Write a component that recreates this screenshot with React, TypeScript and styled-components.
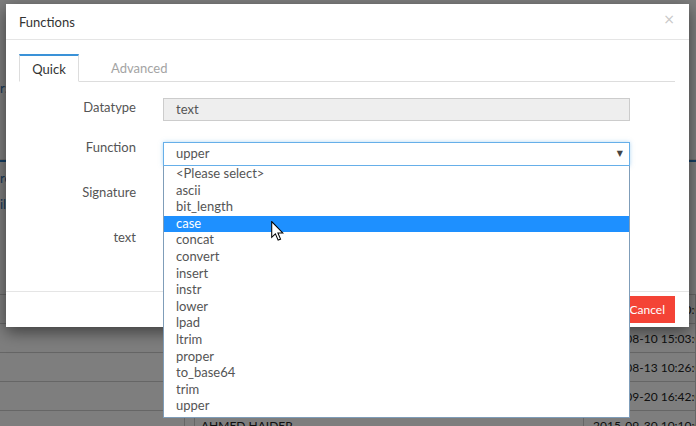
import styled, { createGlobalStyle } from "styled-components";

const GlobalStyle = createGlobalStyle`
  html, body {
    margin: 0;
    padding: 0;
    font-family: "Lato", "Open Sans", sans-serif;
  }
`;

const functions = [
  "<Please select>",
  "ascii",
  "bit_length",
  "case",
  "concat",
  "convert",
  "insert",
  "instr",
  "lower",
  "lpad",
  "ltrim",
  "proper",
  "to_base64",
  "trim",
  "upper",
];

const backRows = [
  { name: "", date: "2015-07-29 11:20:00.0" },
  { name: "", date: "2015-08-10 15:03:00.0" },
  { name: "", date: "2015-08-13 10:26:00.0" },
  { name: "", date: "2015-09-20 16:42:00.0" },
  { name: "AHMED HAIDER", date: "2015-09-30 10:10:00.0" },
];

function App() {
  return (
    <>
      <GlobalStyle />
      <Page>
        <BackPage>
          <BackTop>
            <SideText>r:</SideText>
          </BackTop>
          <BackMid>
            <SideText>re</SideText>
            <SideText>il</SideText>
          </BackMid>
          <BackTable>
            {backRows.map((row) => (
              <BackRow key={row.date}>
                <BackCell />
                <BackCell />
                <BackCell>{row.name}</BackCell>
                <BackCell>{row.date}</BackCell>
              </BackRow>
            ))}
          </BackTable>
        </BackPage>

        <Overlay>
          <Modal>
            <Header>
              <span>Functions</span>
              <Close>×</Close>
            </Header>
            <Body>
              <Tabs>
                <Tab active>Quick</Tab>
                <Tab>Advanced</Tab>
              </Tabs>
              <Form>
                <Label offset={1}>Datatype</Label>
                <ReadOnly>text</ReadOnly>

                <Label offset={-3}>Function</Label>
                <SelectWrap>
                  <Select>
                    <span>upper</span>
                    <Arrow>▼</Arrow>
                  </Select>
                  <List>
                    {functions.map((f) => (
                      <Option key={f} selected={f === "case"}>
                        {f}
                      </Option>
                    ))}
                  </List>
                  <Cursor viewBox="0 0 12 19" width="13" height="20">
                    <path
                      d="M0.5 0.5 L0.5 15.5 L4 12.2 L6.6 18.2 L8.9 17.2 L6.4 11.4 L11 11.4 Z"
                      fill="#fff"
                      stroke="#000"
                      strokeWidth="1"
                    />
                  </Cursor>
                </SelectWrap>

                <Label offset={-3}>Signature</Label>
                <Spacer />

                <Label offset={-3}>text</Label>
                <Spacer />
              </Form>
            </Body>
            <Footer>
              <CancelButton>Cancel</CancelButton>
            </Footer>
          </Modal>
        </Overlay>
      </Page>
    </>
  );
}

export default App;

const Page = styled.div`
  position: relative;
  width: 696px;
  height: 426px;
  overflow: hidden;
  background: #fdfdfd;
`;

const BackPage = styled.div`
  display: flex;
  flex-direction: column;
  color: #222;
  font-size: 12px;

  & > * {
    flex-shrink: 0;
  }
`;

const BackTop = styled.div`
  height: 160px;
  padding-top: 80px;
  box-sizing: border-box;
  border-bottom: 1px solid #ddd;
`;

const BackMid = styled.div`
  display: flex;
  flex-direction: column;
  gap: 10px;
  height: 134px;
  padding-top: 8px;
  box-sizing: border-box;
  border-top: 2px solid #2a7fc8;
`;

const SideText = styled.div`
  font-size: 13px;
  color: #2a6fb0;
`;

const BackTable = styled.div`
  display: flex;
  flex-direction: column;
`;

const BackRow = styled.div`
  display: grid;
  grid-template-columns: 185px 7px 392px 1fr;
  height: 29px;
  flex-shrink: 0;
  border-top: 1px solid #ccc;
  box-sizing: border-box;
`;

const BackCell = styled.div`
  display: flex;
  align-items: center;
  padding-left: 9px;
  border-right: 1px solid #ccc;
  white-space: nowrap;
  overflow: hidden;
  font-size: 12px;
`;

const Overlay = styled.div`
  position: absolute;
  inset: 0;
  background: rgba(0, 0, 0, 0.5);
  padding: 4px 7px 0 6px;
  box-sizing: border-box;
`;

const Modal = styled.div`
  width: 683px;
  background: #fff;
  box-shadow: 0 5px 15px rgba(0, 0, 0, 0.5);
  display: flex;
  flex-direction: column;
`;

const Header = styled.div`
  height: 35px;
  display: flex;
  align-items: center;
  justify-content: space-between;
  padding: 0 14px 0 13px;
  border-bottom: 1px solid #e5e5e5;
  font-size: 13px;
  color: #333;
`;

const Close = styled.span`
  font-family: "DejaVu Sans", sans-serif;
  font-size: 14px;
  color: #c8c8c8;
  margin-top: -6px;
`;

const Body = styled.div`
  padding: 14px 14px 0 13px;
`;

const Tabs = styled.div`
  display: flex;
  border-bottom: 1px solid #ddd;
  height: 27px;
`;

const Tab = styled.div<{ active?: boolean }>`
  display: flex;
  align-items: center;
  justify-content: center;
  box-sizing: border-box;
  height: 28px;
  font-size: 13px;
  ${({ active }) =>
    active
      ? `
    width: 60px;
    border: 1px solid #ddd;
    border-top: 2px solid #3a92d8;
    border-bottom-color: #fff;
    background: #fff;
    color: #333;
  `
      : `
    padding: 0 32px;
    color: #a4a4a4;
  `}
`;

const Form = styled.div`
  display: grid;
  grid-template-columns: 117px 467px;
  column-gap: 27px;
  row-gap: 21px;
  align-items: start;
  margin-top: 16px;
`;

const Label = styled.div<{ offset: number }>`
  text-align: right;
  font-size: 13px;
  color: #555;
  margin-top: ${({ offset }) => offset}px;
  line-height: 16px;
`;

const Spacer = styled.div`
  height: 24px;
`;

const ReadOnly = styled.div`
  height: 23px;
  box-sizing: border-box;
  border: 1px solid #ccc;
  background: #eee;
  padding: 0 12px 1px;
  display: flex;
  align-items: center;
  font-size: 13px;
  color: #555;
`;

const SelectWrap = styled.div`
  position: relative;
`;

const Select = styled.div`
  height: 24px;
  box-sizing: border-box;
  border: 1px solid #66afe9;
  box-shadow: 0 0 4px rgba(102, 175, 233, 0.5);
  padding: 0 6px 2px 12px;
  display: flex;
  align-items: center;
  justify-content: space-between;
  font-size: 13px;
  color: #555;
  background: #fff;
`;

const Arrow = styled.span`
  font-family: "DejaVu Sans", sans-serif;
  font-size: 8px;
  color: #444;
`;

const List = styled.div`
  position: absolute;
  top: 24px;
  left: 0;
  width: 467px;
  box-sizing: border-box;
  border: 1px solid #7f9db9;
  border-top: none;
  background: #fff;
  padding: 0 0 2px;
  z-index: 2;
`;

const Option = styled.div<{ selected?: boolean }>`
  height: 16.6px;
  line-height: 14.6px;
  padding-left: 12px;
  font-size: 13px;
  color: ${({ selected }) => (selected ? "#fff" : "#555")};
  background: ${({ selected }) => (selected ? "#1e90ff" : "transparent")};
`;

const Cursor = styled.svg`
  position: absolute;
  left: 108px;
  top: 79px;
  z-index: 3;
`;

const Footer = styled.div`
  display: flex;
  justify-content: flex-end;
  margin-top: 35px;
  padding: 4px 14px 4px;
  border-top: 1px solid #e5e5e5;
`;

const CancelButton = styled.button`
  height: 27px;
  border: none;
  background: #f44336;
  color: #fff;
  font-family: inherit;
  font-size: 12px;
  padding: 0 10px 0 14px;
`;
